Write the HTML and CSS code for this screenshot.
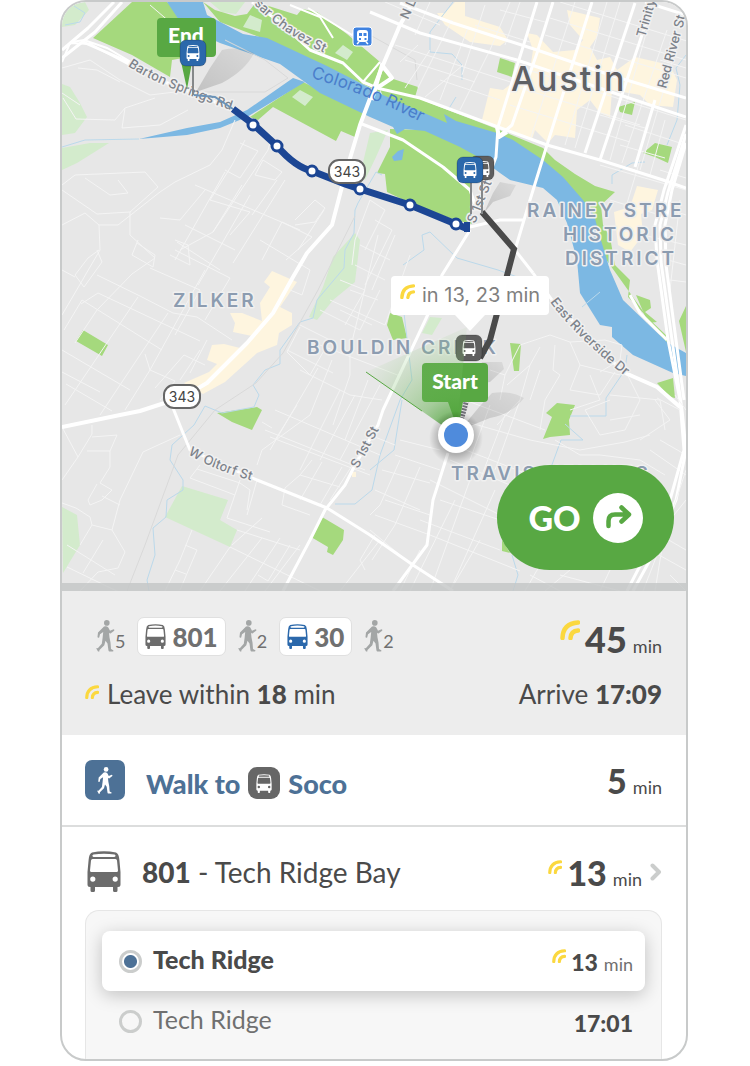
FILE: index.html
```html
<!DOCTYPE html>
<html lang="en">
<head>
    <meta charset="UTF-8">
    <meta name="viewport" content="width=device-width, initial-scale=1.0">
    <title>Trip to Barton Springs Rd</title>
    <link rel="stylesheet" href="styles.css">
</head>
<body>
    <!-- Shared icons -->
    <svg class="sprite" aria-hidden="true">
        <symbol id="bus" viewBox="0 0 34 41">
            <path fill-rule="evenodd" d="M5 1.6Q17-1 29 1.6Q32 3 32.4 9L33.5 21V33.5Q33.5 36 31 36H30.5V39.5Q30.5 41 29 41H27.5Q26 41 26 39.5V36H8V39.5Q8 41 6.500 41H5Q3.500 41 3.500 39.500V36H3Q.5 36 .5 33.500V21L1.600 9Q2 3 5 1.600ZM6.500 3.500Q5.200 3.800 5.500 5T7 6H27Q28.300 6 28.500 5T27.500 3.500Q17 1.800 6.500 3.500ZM5.500 8Q4.200 8 4 9.500L3 19.500Q3 21 4.500 21H29.500Q31 21 31 19.500L30 9.500Q29.800 8 28.500 8ZM5.800 25.500A2.600 2.600 0 1 0 5.800 30.700A2.600 2.600 0 1 0 5.800 25.500ZM28.200 25.500A2.600 2.600 0 1 0 28.200 30.700A2.600 2.600 0 1 0 28.200 25.500Z"/>
        </symbol>
        <symbol id="walk" viewBox="0 0 19 32">
            <circle cx="10.800" cy="2.900" r="2.800"/>
            <path d="M8 6.500Q10.500 5.500 12.300 7.500L14 10.800L17.500 9.200Q18.800 9.500 18.200 10.700L14.500 13.500Q13.500 13.600 13 12.800L13.500 17.500L14.500 22.500L15 29L17.300 30.200Q17.800 31.500 16.500 31.500H13.300Q12.500 31.400 12.400 30L11.500 23.500L9.500 20.800L8.300 25.200L3.500 30L3.300 31.600H2L.3 28.500Q.5 27.500 1.800 28.200L5.800 23.800L6.600 18L7.200 12L4 14.200L3.200 17.500Q1.500 18 1.500 16.800L2 12.500Z"/>
        </symbol>
        <symbol id="live" viewBox="0 0 20 20">
            <path d="M2.500 18Q3 3.500 18 2.500M10.500 18Q11 11 18 10.500" fill="none" stroke="#fbd83f" stroke-width="4.500" stroke-linecap="round"/>
        </symbol>
    </svg>

    <main class="phone">
        <section class="map">
            <svg class="map-canvas" viewBox="62 2 624 589" role="img" aria-label="Route map of Austin">
                <defs>
                    <radialGradient id="beam" gradientUnits="userSpaceOnUse" cx="456" cy="435" r="110">
                        <stop offset="0" stop-color="#3f9a2a" stop-opacity=".95"/>
                        <stop offset=".35" stop-color="#62b04d" stop-opacity=".5"/>
                        <stop offset="1" stop-color="#8cc97a" stop-opacity=".04"/>
                    </radialGradient>
                    <radialGradient id="glow">
                        <stop offset=".6" stop-opacity=".24"/>
                        <stop offset="1" stop-opacity="0"/>
                    </radialGradient>
                    <linearGradient id="shade" x1="0" y1="1" x2="1" y2="0">
                        <stop offset="0" stop-opacity=".16"/>
                        <stop offset="1" stop-opacity=".06"/>
                    </linearGradient>
                    <path id="river-line" d="M311 78Q365 92 440 132"/>
                    <path id="barton-line" d="M128 66Q160 88 250 116"/>
                    <path id="chavez-line" d="M254 4Q285 38 345 62"/>
                    <path id="riverside-line" d="M550 302Q578 340 640 388"/>
                    <path id="oltorf-line" d="M188 454Q215 472 275 487"/>
                </defs>
                <rect x="62" y="2" width="624" height="589" fill="#e7e7e7"/>

                <!-- Parks -->
                <g class="park-light">
                    <path d="M62 7L85 2L89 10L75 25L62 27ZM62 84L70 87L80 103L87 117L75 133L62 135ZM62 148L90 143L109 143L77 163L62 170Z"/>
                    <path d="M355 233L360 240L355 282L333 300L317 320L309 317L323 287L333 257Z"/>
                    <path d="M182 486L228 500L220 520L237 530L230 547L165 517ZM62 507L77 515L80 545L63 573ZM430 317L442 318L432 335L422 333Z"/>
                    <path d="M370 133L388 130L376 157L365 180L360 175ZM210 2H245L236 14L222 12Z"/>
                </g>
                <g class="park">
                    <path d="M132 2L93 38L132 55L170 77L172 60L215 52L207 30L185 20L167 2Z"/>
                    <path d="M203 2L215 10L235 16L247 14L256 2L297 15L302 9L317 12L347 34L380 62V92L327 68L267 40L220 22Z"/>
                    <path d="M250 117L303 82L365 112L355 137L341 131L336 141L273 107L258 120Z"/>
                    <path d="M390 129L425 130L460 146L485 160L470 185L472 224L455 220L410 203L387 192L385 174L377 173L390 147Z"/>
                    <path d="M370 60L380 67L390 78L418 87L415 97L440 107L497 129L543 148L555 160L575 174L595 186L615 192L601 205L603 225L610 237L615 265L630 280L628 297L648 318L668 337V346L585 230L560 180L500 145L447 127L383 97Z"/>
                    <path d="M636 295L650 300L651 308L645 312L657 322L648 323Z"/>
                    <path d="M500 58L515 63L512 77L497 72ZM618 107L635 102L632 115L620 112ZM643 153L655 143L672 147L668 163L655 157Z"/>
                    <path d="M83 330L108 345L102 356L76 341ZM217 413L257 407L262 410L252 430L232 422ZM322 517L344 530L343 540L333 555L327 552L328 547L311 537Z"/>
                    <path d="M390 313L402 317L407 338L393 340L387 325ZM510 343L521 344L519 371L514 371ZM657 383L673 378L675 398L670 397Z"/>
                    <path d="M557 403L575 405L569 420L570 435L550 437L543 439L552 417L546 413ZM686 306L679 321L686 352ZM502 540L510 553L502 551Z"/>
                </g>
                <path class="park-light" d="M250 15L262 20L260 32L243 27ZM343 45L353 52L347 60L335 53ZM300 90L313 97L305 106L292 97Z"/>

                <!-- Commercial blocks -->
                <g class="block">
                    <path d="M437 13L445 13L455 2H465V16L500 27L508 40L500 46L470 42L445 25Z"/>
                    <path d="M527 33L537 35L553 52L575 50L583 40L570 25L567 10L600 18L597 37L590 47L597 60L610 57L617 70L635 57L670 65L677 80L673 107L650 105L640 95L612 90L610 117L600 113L590 100L577 110L575 138L555 135L548 143L535 130L532 139L482 120L490 88L503 90L530 70L533 50Z"/>
                    <path d="M637 186L658 190L652 210L641 214L643 235L630 252L618 245L614 212L630 207Z"/>
                    <path d="M272 271L297 282L280 307L292 313V325L279 333L277 345L257 353L225 382L203 394L184 383L209 372L217 364L207 360L212 345L224 344L240 348L252 336L233 332L235 323L230 313L242 313L262 321L260 303L270 287L264 282Z"/>
                    <path d="M352 472H356V477H352Z"/>
                </g>

                <!-- Water -->
                <g class="water">
                    <path d="M167 2H203L207 15L243 34L267 38L327 66L370 88L383 95L447 123L444 114L456 121L497 133L513 140L543 160L563 177L583 200L594 215L600 237L610 270L623 300L647 323L668 343L686 353V376L673 373L633 355L612 337V327L600 325L580 293L577 260L567 223L557 200L543 188L510 180L500 173L480 158L460 147L425 131L405 129L397 134L393 127L370 117L320 93L280 64L220 43L183 26Z"/>
                    <path d="M139 139L187 128L220 122L247 110L293 78L305 82L247 117L220 128L187 135Z"/>
                    <path d="M392 157L398 151L404 149L402 160L394 161Z"/>
                </g>
                <g class="creek">
                    <path d="M62 147L85 140L139 139M74 6L85 13L80 22L65 25M355 210L354 233L345 250L344 268L317 300L313 318L300 322L280 350V364L265 370L253 385L259 395L254 407L222 413L205 406L194 425L172 445L170 460L183 480V490L167 500L166 517L153 528L155 555L147 580L149 591"/>
                    <path d="M355 210L358 203L376 172L382 175M453 2L430 32V52L452 54L462 65V80M403 265L424 250L422 235L430 232L457 258L498 270L520 278M403 305L412 380L400 400L380 455L372 490L355 504H335M582 307L600 292M627 355L625 370L606 398V416H570M565 424L583 440H561L553 462L550 470M686 55L676 68L680 85L677 120L667 145M645 162L632 163L612 175V184M456 97L448 110"/>
                    <path d="M512 555L518 575L513 591M402 400L394 450L370 470"/>
                </g>
                <path class="rail" d="M355 216L318 290L283 353L256 383L215 410L178 455L145 545L127 591M370 35L415 60L417 80M225 40L265 60L288 78L265 92H192"/>

                <!-- Side streets -->
                <g class="street">
                    <path d="M62 93L80 105M62 68L90 60L120 80L150 95L175 92M120 82L97 70L78 68M63 98L76 119L115 120L125 108L155 98M125 108L122 128L160 125L188 110M150 5L185 35L195 60"/>
                    <path d="M62 185L75 175L145 172L158 187L130 212L97 214L62 190M85 178L110 195L128 193L118 180M235 120L222 150L210 165L175 182L160 192L118 225L99 225M245 140L232 165L210 200L250 212L230 235M240 143L258 151L240 178L225 170M255 175L263 160L282 172L275 180L255 175M277 180L252 215M213 232L268 150L272 135M180 250L213 232L242 185M295 220L315 200L325 208L315 222L295 225M205 190L180 220L160 218"/>
                    <path d="M62 225L85 213L99 225L100 250L62 315M130 212V235L155 258L132 274L97 310L75 343M97 275L140 296L173 313L197 317L232 340M99 250L88 258L75 275L84 287L102 262L97 250M62 270L75 277M81 304L98 293L200 341M64 330L82 300L162 350M62 350L130 390M66 384L112 411M62 372L100 392M138 240L132 255L153 267L155 255L137 243M138 297L65 405M168 313L100 415M205 270L150 370L125 410M175 250L230 278L205 320M150 268L200 290L175 335"/>
                    <path d="M175 260L225 172M198 285L250 195M233 263L285 180M262 260L282 222L312 237L286 260M298 250L324 210M185 225L235 250M177 242L220 270M170 255L190 265L188 245L175 240M260 240L310 270L302 295L290 290M195 185L300 230M200 350L180 380M207 340L190 373M145 354L150 370L175 381L160 400M155 388L184 355L205 365"/>
                    <path d="M62 427L78 457L92 434V425M78 457L62 480M87 451H110L117 435L92 437M110 451V467L100 483L112 490L102 500L90 505L88 500L97 484M180 435L143 452L120 500L112 530L92 525L90 517L76 508L62 503M102 496L120 505M112 530L125 552L118 568L98 572L80 591M67 545L115 575M92 525L80 545M67 567L125 595M103 540L83 573"/>
                    <path d="M200 465L190 478L235 495M197 469L240 483M240 480L227 518L270 532M240 483L250 490L247 510M257 480L247 515M262 518L232 545M237 530L300 550M192 530L180 560L165 591M185 545L197 550L180 590M175 570L186 574M230 547L320 591M262 538L220 591M280 538L245 591M300 545L265 591M230 547L200 591M258 575L268 581L290 545"/>
                    <path d="M365 250L385 210L370 200L355 240L352 265M300 325L330 340L310 375L287 352L300 327M320 345L400 376M300 370L350 395L382 400M287 350L333 373M332 360L310 415L262 450L257 465M350 352V375L333 425M368 380L345 440M297 405L275 440M318 368L270 450M340 390L300 470M355 395L320 460M380 385L340 460M275 410L380 455M265 430L365 470M262 422L272 428M270 437L370 475M300 475L285 488L282 505L310 515M312 460L300 475L340 487M322 462L300 500M342 467L320 505M362 450L330 500"/>
                    <path d="M340 280L365 290L345 325M320 310L360 330L380 290M330 300L385 325M360 245L390 260M355 265L385 280M350 290L378 300M340 310L372 325M375 220L392 230L365 285M378 235L350 350M395 235L372 290M410 255L385 325"/>
                    <path d="M520 345L550 335L570 342L605 340L622 345L620 360L600 372M540 347L530 365L507 385M520 345L505 375L490 370M555 345L553 370L560 375L545 400M570 342L580 365L620 375M580 365L570 390L600 395L615 372M590 375L600 400L570 410M530 365L520 400L497 425M505 375L500 400M540 370L530 400"/>
                    <path d="M465 400L545 430M460 420L530 440L580 450L625 442L650 435M440 440L530 475M450 460L510 485M520 400L495 470M490 405L470 460M505 415L480 480M625 370L640 400L625 430L600 435L585 410L610 400M655 400L670 420L640 440M610 395L660 400L665 430M640 415L610 420M555 440L580 455H600L640 460M545 400L540 430"/>
                    <path d="M400 460L380 505L370 515M420 467L395 525L372 560M385 500L430 515M375 515L430 535M370 530L400 555M430 480L500 515M420 520L500 550M440 500L530 530M470 480L430 591M495 490L450 591M455 500L410 591M480 540L450 591M420 550L400 591M430 535L520 571M400 440L440 450M395 455L440 470M382 470L430 483M370 435L395 445M375 490L420 510"/>
                    <path d="M540 565L525 591M570 570L545 591M610 570L600 591M560 575L620 591M530 575L560 591M660 535L686 550M650 550L686 570M670 520L686 500M665 530L655 591M660 440L686 455M650 450L686 475M640 460L665 475M670 575L686 591M375 535L360 560L365 570M380 540L340 591"/>
                </g>
                <g class="street">
                    <path d="M385 2L440 25M430 2L415 35M452 20L418 88M468 28L440 100M485 5L462 75M510 2L490 50L460 110M500 10L545 22M475 25L530 42M520 2L505 45M395 45L520 85M405 60L475 82M418 45L400 62M430 50L405 88M440 80L500 100M463 65L425 97"/>
                    <path d="M560 2L690 42M550 18L686 60M545 35L686 78M528 70L686 120M520 88L640 125M510 105L630 142M575 2L530 140M607 2L565 145M620 2L575 148M655 2L610 160M667 30L622 163M680 35L640 170M625 125L686 145M620 145L665 158M600 115L645 128M660 60L686 68M665 120L650 175M635 170L600 160"/>
                    <path d="M600 165L686 190M660 170L686 178M610 200L660 215M640 160L625 210M686 215L665 208M620 230L665 240M665 240L686 245M668 260L686 265M670 280L686 282M680 200L670 290"/>
                </g>
                <path class="street bold" d="M62 62L70 43L90 44L130 65M72 42L84 40L107 48L131 62M308 8L352 35L358 28M380 62L363 82M333 38L320 17L290 5"/>

                <!-- Main roads -->
                <g class="road">
                    <path d="M122 2L95 32L62 58M114 2L88 28L62 50M83 42L131 63L165 82L235 110"/>
                    <path d="M252 2L277 20L310 50L343 63L363 82L377 88L420 98L498 127L547 145L600 160L663 180L686 188"/>
                    <path d="M370 12L420 33L517 60L620 95L686 117M400 3L453 23L537 50L610 75L686 98M645 2L686 15"/>
                    <path d="M537 2L498 127L496 157L484 190M553 2L537 53L512 125L498 137M592 2L547 145L530 200L515 250L533 273M635 3L585 153M647 20L600 160M655 100L635 167"/>
                    <path d="M362 124L403 140L443 167L470 190L477 210M470 227L500 220L523 220M470 230L442 275L430 310L383 410L378 425L355 465L345 485L325 510L310 540L283 591"/>
                    <path d="M533 273L552 300L623 372M173 408L183 433L190 450L257 480L327 508L370 535L413 565L453 591M448 453L433 500L427 545L393 591"/>
                </g>
                <g class="road wide">
                    <path d="M413 2L400 25L380 72L360 125L345 175L332 225L307 253L293 277L273 313L247 343L207 383L183 397L140 411L120 415L62 427"/>
                    <path d="M372 100L382 65L392 78L377 88M497 127L499 137L507 132M623 372L657 387L680 407"/>
                </g>
                <g class="highway">
                    <path d="M686 125L664 190L655 225L657 260L668 340L680 400L684 450L670 500L643 560L627 591"/>
                    <path d="M686 143L672 190L665 225L666 265L676 340L684 400M686 134L668 192L660 225L661 262L672 340L682 410L686 450L676 500L650 560L633 591"/>
                    <path d="M630 295L640 313L667 340"/>
                </g>
                <g class="street">
                    <path d="M686 470L676 500L657 555L643 591M675 395L686 410M657 398L680 410"/>
                </g>

                <!-- Area and street names -->
                <text class="city" x="511" y="91">Austin</text>
                <g class="area">
                    <text x="527" y="217">RAINEY STRE</text>
                    <text x="563" y="241">HISTORIC</text>
                    <text x="565" y="265">DISTRICT</text>
                    <text x="173" y="307">ZILKER</text>
                    <text x="307" y="354">BOULDIN CREEK</text>
                    <text x="451" y="480">TRAVIS HEIGHTS</text>
                </g>
                <text class="river-name"><textPath href="#river-line">Colorado River</textPath></text>
                <g class="street-name">
                    <text><textPath href="#barton-line">Barton Springs Rd</textPath></text>
                    <text><textPath href="#chavez-line">sar Chavez St</textPath></text>
                    <text><textPath href="#riverside-line">East Riverside Dr</textPath></text>
                    <text><textPath href="#oltorf-line">W Oltorf St</textPath></text>
                    <text transform="translate(358 469) rotate(-62)">S 1st St</text>
                    <text transform="translate(475 224) rotate(-68)">S 1st St</text>
                    <text transform="translate(408 20) rotate(-66)">N L</text>
                    <text transform="translate(645 38) rotate(-74)">Trinity</text>
                    <text transform="translate(666 89) rotate(-75)">Red River St</text>
                </g>

                <!-- Pin shadows -->
                <path d="M196 92L210 68L222 50Q240 46 254 53Q246 70 222 83Z" fill="url(#shade)"/>
                <path d="M484 213L493 193L500 182L516 185L510 196L493 202Z" fill="url(#shade)"/>
                <path d="M470 385L482 362H502L504 369L490 382Z" fill="url(#shade)"/>
                <path d="M460 430L480 406L492 393Q510 390 524 398Q512 414 490 418Z" fill="url(#shade)"/>

                <!-- Routes -->
                <path d="M194 95L215 97L233 109" fill="none" stroke="#6b93b8" stroke-width="2"/>
                <path d="M233 109L253 124L277 146Q295 167 312 171L345 184L360 189L410 205L468 229" fill="none" stroke="#1c4694" stroke-width="7"/>
                <path d="M467 222V232" stroke="#1c4694" stroke-width="6"/>
                <path d="M482 212L514 249L490 340L480 358" fill="none" stroke="#4a4a4a" stroke-width="6"/>
                <path d="M476 365L464 410L459 428" fill="none" stroke="#707078" stroke-width="5" stroke-dasharray="2 1"/>
                <g class="stop">
                    <circle cx="253" cy="125" r="5"/>
                    <circle cx="277" cy="146" r="5"/>
                    <circle cx="312" cy="171" r="5"/>
                    <circle cx="360" cy="189" r="5"/>
                    <circle cx="410" cy="205" r="5"/>
                    <circle cx="456" cy="224" r="5"/>
                </g>
                <g class="shield">
                    <rect x="329" y="160" width="36" height="23" rx="10"/>
                    <text x="347" y="177">343</text>
                    <rect x="164" y="385" width="36" height="23" rx="10"/>
                    <text x="182" y="402">343</text>
                </g>

                <!-- Rail station -->
                <rect x="353" y="27" width="19" height="19" rx="3" fill="#3f82e0" stroke="#fff"/>
                <rect x="357" y="30" width="11" height="12" rx="3" fill="#fff"/>
                <path d="M359 33H362V36H359ZM363.500 33H366.500V36H363.500ZM359 38H361V40H359ZM364.500 38H366.500V40H364.500Z" fill="#3f82e0"/>
                <path d="M359 42L357 44M366 42L368 44" stroke="#fff" stroke-width="1.500"/>

                <!-- Bus stops and flags -->
                <path class="flag" d="M161 18H212Q216 18 216 22V53Q216 57 212 57H193L187 89L180 57H161Q157 57 157 53V22Q157 18 161 18Z"/>
                <text class="flag-text" x="186" y="43">End</text>
                <path class="pole" d="M193 62V95M471 180V214M482 180V214"/>
                <rect class="badge badge-blue" x="180" y="40" width="26" height="26" rx="6"/>
                <use href="#bus" x="186" y="45" width="14" height="16" fill="#fff"/>
                <rect class="badge badge-grey" x="470" y="156" width="24" height="24" rx="6"/>
                <use href="#bus" x="476" y="161" width="14" height="16" fill="#fff"/>
                <rect class="badge badge-blue" x="457" y="157" width="26" height="26" rx="6"/>
                <use href="#bus" x="463" y="162" width="14" height="16" fill="#fff"/>

                <rect class="badge badge-grey" x="456" y="335" width="26" height="26" rx="6"/>
                <use href="#bus" x="462" y="340" width="14" height="16" fill="#fff"/>
                <path class="flag" d="M426 363H484Q488 363 488 367V398Q488 402 484 402H463L458 430L448 402H426Q422 402 422 398V367Q422 363 426 363Z"/>
                <path d="M366 372L456 435L467 327Z" fill="url(#beam)"/>
                <path d="M366 372L422 411" stroke="#58a843"/>
                <text class="flag-text" x="455" y="389">Start</text>
                <circle cx="456" cy="438" r="27" fill="url(#glow)"/>
                <circle cx="456" cy="435" r="18" fill="#fff"/>
                <circle cx="456" cy="435" r="12" fill="#4f8bdc"/>

                <path class="callout" d="M395 276H545Q549 276 549 280V311Q549 315 545 315H485L470 331L455 315H395Q391 315 391 311V280Q391 276 395 276Z"/>
                <use href="#live" x="400" y="284" width="15" height="15"/>
                <text class="callout-text" x="422" y="302">in 13, 23 min</text>

                <rect x="62" y="583" width="624" height="8" fill="#c3c6c5" opacity=".8"/>
            </svg>
            <button type="button" class="go">
                GO
                <svg class="go-icon" viewBox="0 0 50 50" aria-hidden="true">
                    <circle cx="25" cy="25" r="25" fill="#fff"/>
                    <path d="M15.500 33V28Q15.500 21.500 22 21.500H35M28.500 14.500L36 21.500L28.500 28.500" fill="none" stroke="#58a843" stroke-width="4.500" stroke-linecap="round" stroke-linejoin="round"/>
                </svg>
            </button>
        </section>

        <!-- Trip summary -->
        <section class="summary">
            <div class="row summary-top">
                <div class="legs">
                    <span class="leg-walk"><svg class="icon-walk"><use href="#walk"/></svg>5</span>
                    <span class="leg-bus"><svg class="icon-bus grey"><use href="#bus"/></svg>801</span>
                    <span class="leg-walk"><svg class="icon-walk"><use href="#walk"/></svg>2</span>
                    <span class="leg-bus"><svg class="icon-bus blue"><use href="#bus"/></svg>30</span>
                    <span class="leg-walk"><svg class="icon-walk"><use href="#walk"/></svg>2</span>
                </div>
                <div class="time total"><svg class="live live-large"><use href="#live"/></svg><strong>45</strong><span>min</span></div>
            </div>
            <div class="row summary-bottom">
                <p><svg class="live"><use href="#live"/></svg>Leave within <strong>18</strong> min</p>
                <p>Arrive <strong>17:09</strong></p>
            </div>
        </section>

        <!-- Steps -->
        <section class="row step step-walk">
            <span class="walk-tile"><svg class="icon-step-walk"><use href="#walk"/></svg></span>
            <h2>Walk to <span class="stop-tile"><svg class="icon-stop"><use href="#bus"/></svg></span> Soco</h2>
            <div class="time"><strong>5</strong><span>min</span></div>
        </section>

        <section class="step-bus">
            <a href="#departures" class="row step">
                <svg class="icon-step-bus"><use href="#bus"/></svg>
                <span class="line-name"><strong>801</strong> - Tech Ridge Bay</span>
                <span class="time"><svg class="live"><use href="#live"/></svg><strong>13</strong><span>min</span></span>
                <svg class="chevron" viewBox="0 0 12 18"><path d="M2.500 2.500L9 9L2.500 15.500" fill="none" stroke="#cbcdcc" stroke-width="4" stroke-linecap="round" stroke-linejoin="round"/></svg>
            </a>
            <div class="departures" id="departures">
                <label class="row departure selected">
                    <input type="radio" name="departure" checked>
                    <span class="departure-name">Tech Ridge</span>
                    <span class="time"><svg class="live"><use href="#live"/></svg><strong>13</strong><span>min</span></span>
                </label>
                <label class="row departure">
                    <input type="radio" name="departure">
                    <span class="departure-name">Tech Ridge</span>
                    <span class="time"><strong>17:01</strong></span>
                </label>
            </div>
        </section>
    </main>
</body>
</html>
```
FILE: styles.css
```css
* {
    box-sizing: border-box;
}
body {
    margin: 0;
    padding: 0 62px 5px 60px;
    background: white;
    color: #4a4a4a;
    font-family: Lato, "Open Sans", sans-serif;
    font-size: 26px;
}
p {
    margin: 0;
}
strong {
    font-weight: 900;
}
.sprite {
    display: none;
}
.phone {
    border: 2px solid #c8caca;
    border-radius: 26px;
    overflow: hidden;
}
.row {
    display: flex;
    align-items: center;
}

/* Map */
.map {
    position: relative;
}
.map-canvas {
    display: block;
    width: 100%;
    font-family: Inter, sans-serif;
}
.park {
    fill: #a5d97d;
}
.park-light {
    fill: #d3ebcc;
}
.block {
    fill: #fef5df;
}
.water {
    fill: #7cb8e3;
}
.creek {
    fill: none;
    stroke: #bbd9eb;
}
.rail {
    fill: none;
    stroke: #d9d9d9;
}
.street {
    fill: none;
    stroke: #f4f4f4;
    stroke-width: 1;
}
.bold {
    stroke: white;
    stroke-width: 2;
}
.road, .highway {
    fill: none;
    stroke: white;
    stroke-width: 3;
    stroke-linejoin: round;
}
.wide {
    stroke-width: 4;
}
.city, .area, .street-name {
    paint-order: stroke;
    stroke: #f0f0f0;
    stroke-width: 3;
    stroke-linejoin: round;
}
.city {
    fill: #5f6165;
    font-size: 34px;
    font-weight: 500;
    letter-spacing: 2px;
}
.area {
    fill: #8c9cb0;
    font-size: 19px;
    font-weight: 600;
    letter-spacing: 3px;
}
.street-name {
    fill: #7d828a;
    font-size: 13px;
    font-weight: 500;
}
.river-name {
    fill: #4a7ecb;
    font-size: 17px;
}
.stop {
    fill: white;
    stroke: #1c4694;
    stroke-width: 3;
}
.shield rect {
    fill: white;
    stroke: #666;
    stroke-width: 2;
}
.shield text {
    fill: #444;
    font-size: 14px;
    text-anchor: middle;
}
.flag {
    fill: #58a843;
}
.flag-text {
    fill: white;
    font-family: Lato, sans-serif;
    font-size: 21px;
    font-weight: 900;
    text-anchor: middle;
}
.pole {
    stroke: #85888a;
    stroke-width: 2;
}
.badge {
    stroke: rgba(0, 0, 0, 0.2);
}
.badge-blue {
    fill: #2b68ab;
}
.badge-grey {
    fill: #5e5e5e;
}
.callout {
    fill: white;
}
.callout-text {
    fill: #808080;
    font-size: 20px;
}
.go {
    position: absolute;
    right: 12px;
    bottom: 21px;
    display: flex;
    align-items: center;
    justify-content: center;
    gap: 12px;
    width: 177px;
    height: 105px;
    border: none;
    border-radius: 53px;
    background: #58a843;
    color: white;
    font-family: inherit;
    font-size: 34px;
    font-weight: 900;
    cursor: pointer;
}
.go-icon {
    width: 50px;
    height: 50px;
}

/* Summary */
.summary {
    padding: 26px 24px 26px 23px;
    background: #ededed;
}
.summary-top, .summary-bottom {
    justify-content: space-between;
}
.summary-top {
    height: 39px;
    margin-bottom: 23px;
}
.summary-bottom {
    line-height: 30px;
}
.legs {
    display: flex;
    gap: 12px;
    padding-left: 11px;
}
.leg-walk, .leg-bus {
    display: flex;
    align-items: center;
    height: 39px;
    color: #707070;
}
.leg-walk {
    align-items: flex-end;
    padding-bottom: 4px;
    font-size: 18px;
    line-height: 22px;
}
.leg-bus {
    gap: 6px;
    padding: 0 7px;
    border: 1px solid #e0e0e0;
    border-radius: 7px;
    background: white;
    font-weight: 900;
}
.icon-walk {
    width: 19px;
    height: 32px;
    fill: #a3a6a6;
}
.icon-bus {
    width: 21px;
    height: 25px;
}
.grey {
    fill: #6c6c6c;
}
.blue {
    fill: #2b68ab;
}
.live {
    width: 14px;
    height: 14px;
    margin-right: 8px;
    vertical-align: 5px;
}
.time {
    display: flex;
    align-items: baseline;
    margin-left: auto;
    padding-top: 8px;
    font-size: 18px;
    line-height: 38px;
}
.time strong {
    font-size: 34px;
}
.time span {
    margin-left: 6px;
}
.time .live {
    align-self: flex-start;
    margin: 6px 5px 0 0;
}
.total {
    padding-top: 12px;
}
.total strong {
    font-size: 36px;
}
.time .live-large {
    width: 20px;
    height: 20px;
    margin-top: 0;
}

/* Steps */
.step {
    padding: 0 24px 0 23px;
    color: inherit;
    text-decoration: none;
}
.step-walk {
    height: 92px;
    border-bottom: 2px solid #dcdddd;
}
.walk-tile, .stop-tile {
    display: inline-flex;
    align-items: center;
    justify-content: center;
}
.walk-tile {
    width: 40px;
    height: 40px;
    margin-right: 21px;
    border-radius: 7px;
    background: #4d7196;
}
.icon-step-walk {
    width: 16px;
    height: 27px;
    fill: white;
}
.step-walk h2 {
    display: flex;
    align-items: center;
    gap: 8px;
    margin: 0;
    padding-top: 6px;
    color: #4d7196;
    font-size: 27px;
    font-weight: 900;
}
.stop-tile {
    width: 32px;
    height: 32px;
    border-radius: 9px;
    background: #666;
}
.icon-stop {
    width: 16px;
    height: 19px;
    fill: white;
}
.step-bus .step {
    height: 83px;
    padding-top: 6px;
}
.icon-step-bus {
    width: 38px;
    height: 41px;
    margin-right: 19px;
    fill: #6c6c6c;
}
.line-name {
    font-size: 28px;
}
.chevron {
    width: 12px;
    height: 18px;
    margin-left: 8px;
}
.departures {
    margin: 0 24px 0 23px;
    padding: 20px 16px 8px;
    border: 1px solid #e6e6e6;
    border-bottom: none;
    border-radius: 14px 14px 0 0;
    background: #f7f7f7;
}
.departure {
    height: 60px;
    padding: 0 12px 0 17px;
    border-radius: 8px;
    color: #707070;
    font-size: 25px;
}
.departure-name {
    padding-bottom: 4px;
}
.departure input {
    appearance: none;
    width: 23px;
    height: 23px;
    margin: 0 11px 0 0;
    border: 3px solid #cbcdcc;
    border-radius: 50%;
}
.departure input:checked {
    background: radial-gradient(circle, #4d7196 6px, white 7px);
}
.departure .time {
    padding-top: 4px;
}
.departure strong {
    color: #4a4a4a;
    font-size: 23px;
}
.selected {
    background: white;
    box-shadow: 0 4px 18px rgba(0, 0, 0, 0.22);
}
.selected .departure-name {
    color: #4a4a4a;
    font-weight: 900;
}
```
